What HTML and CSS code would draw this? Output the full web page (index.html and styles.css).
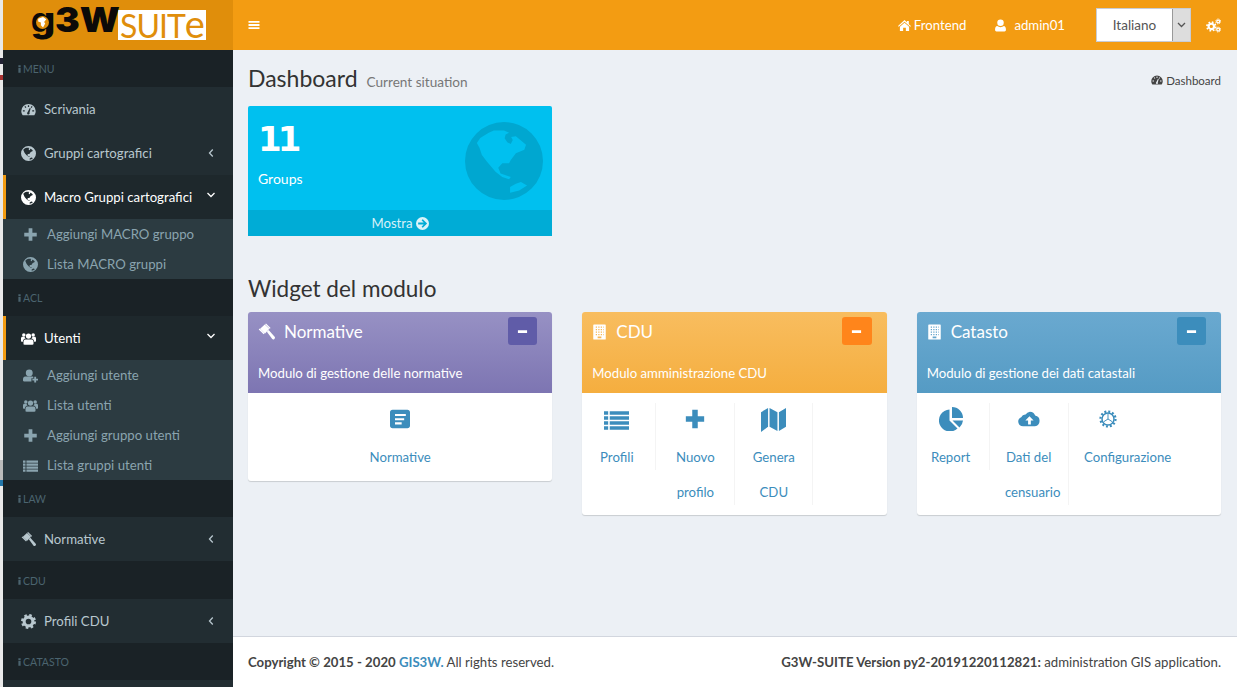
FILE: index.html
```html
<!DOCTYPE html>
<html lang="it">
<head>
  <meta charset="UTF-8">
  <meta name="viewport" content="width=device-width, initial-scale=1.0">
  <title>G3W-SUITE</title>
  <link rel="stylesheet" href="styles.css">
</head>
<body>
  <svg class="sprite" xmlns="http://www.w3.org/2000/svg">
    <symbol id="i-globe" viewBox="0 0 24 24"><path fill="currentColor" fill-rule="evenodd" d="M12 0a12 12 0 1 0 0 24a12 12 0 1 0 0-24zM3.650 6.470L4.690 4.900L7.300 3.340L8.870 2.610L12 2.610L13.560 3.340L12.500 3.860L12.200 5L13 6.200L14.080 6.800L14.700 5.500L14.200 4.600L15.650 4.380L18.770 6.990L18.250 8.550L15.650 9.600L14.080 11.680L13.560 12.720L11.470 12.720L10.220 14.080L10.950 15.850L14.080 16.900L13.560 17.630L11.470 16.900L9.390 15.330L6.780 12.200L5.200 10.120L4.480 8.030zM13.870 20.030L15.650 18.980L17.210 18.460L19.080 19.500L16.680 21.070L13.870 21.800z"/></symbol>
    <symbol id="i-dash" viewBox="0 0 24 24"><path fill="currentColor" fill-rule="evenodd" d="M12 3A11.500 11.500 0 0 0 .5 14.500C.5 17 1.300 19.300 2.700 21H21.300C22.700 19.300 23.500 17 23.500 14.500A11.500 11.500 0 0 0 12 3zM11 5h2v3h-2zM5.500 7.500l1.500-1.200 1.600 2.200-1.500 1.200zM18.500 7.500l-1.500-1.200-1.600 2.200 1.500 1.200zM3 13h3v2H3zM18 13h3v2h-3zM10.500 16.500L14 9.500l1.500.6-2 7a2 2 0 1 1-3-.6z"/></symbol>
    <symbol id="i-plus" viewBox="0 0 24 24"><path fill="currentColor" d="M9 2h6v7h7v6h-7v7H9v-7H2V9h7z"/></symbol>
    <symbol id="i-minus" viewBox="0 0 24 24"><path fill="currentColor" d="M2 9h20v6H2z"/></symbol>
    <symbol id="i-users" viewBox="0 0 24 24"><circle fill="currentColor" cx="12" cy="8" r="4.200"/><circle fill="currentColor" cx="4.500" cy="6.500" r="2.800"/><circle fill="currentColor" cx="19.500" cy="6.500" r="2.800"/><path fill="currentColor" d="M6.500 13.500h11c1.500 0 2.500 1.500 2.500 4v3c0 .8-.7 1.500-1.500 1.500h-13c-.8 0-1.500-.7-1.500-1.500v-3c0-2.500 1-4 2.500-4zM0 11.500c0-1.500 1-2.500 2-2.500h3.500c.5 1 1 2 2 3-2.500.3-4.500 2-4.500 5H1c-.6 0-1-.4-1-1zM24 11.500c0-1.500-1-2.500-2-2.500h-3.500c-.5 1-1 2-2 3 2.500.3 4.500 2 4.500 5h2c.6 0 1-.4 1-1z"/></symbol>
    <symbol id="i-useradd" viewBox="0 0 24 24"><circle fill="currentColor" cx="10" cy="8" r="5.500"/><path fill="currentColor" d="M3.500 13.500h11c.8 0 1.500.2 2 .5v2.500h-3v5H1.500c-.8 0-1.500-.7-1.500-1.500v-2c0-2.500 1.500-4.500 3.500-4.500zM18 14h3v3h3v3h-3v3h-3v-3h-3v-3h3z"/></symbol>
    <symbol id="i-user" viewBox="0 0 24 24"><circle fill="currentColor" cx="12" cy="7" r="6"/><path fill="currentColor" d="M6 13c1.500 1.300 3.700 2 6 2s4.500-.7 6-2c2.500.3 4 2.800 4 6v1.500c0 1.500-1 2.500-2.500 2.500h-15C3 23 2 22 2 20.500V19c0-3.200 1.500-5.700 4-6z"/></symbol>
    <symbol id="i-list" viewBox="0 0 24 24"><path fill="currentColor" d="M0 4h4v3.500H0zM5.500 4H24v3.500H5.500zM0 8.800h4v3.500H0zM5.500 8.800H24v3.500H5.500zM0 13.600h4v3.500H0zM5.500 13.600H24v3.500H5.500zM0 18.400h4v3.500H0zM5.500 18.400H24v3.500H5.500z"/></symbol>
    <symbol id="i-gavel" viewBox="0 0 24 24"><path fill="currentColor" d="M9.500 1.500L16 7.500 10 14 3 7.500zM1 8.500l1.300-1.300 7 6.500L8 15zM10 1l1.300-1 6.500 6.300L16.500 7.500zM12.500 11.500l2.500-2.500 8.500 9.800c.7.800.7 2-.2 2.800l-.5.500c-.8.700-2 .6-2.700-.2z"/></symbol>
    <symbol id="i-cog" viewBox="0 0 24 24"><circle cx="12" cy="12" r="7" fill="none" stroke="currentColor" stroke-width="5"/><circle cx="12" cy="12" r="10" fill="none" stroke="currentColor" stroke-width="4" stroke-dasharray="4 3.850"/></symbol>
    <symbol id="i-cogs" viewBox="0 0 24 24"><circle cx="8.500" cy="13.500" r="4.300" fill="none" stroke="currentColor" stroke-width="3.400"/><circle cx="8.500" cy="13.500" r="7" fill="none" stroke="currentColor" stroke-width="2.600" stroke-dasharray="2.800 2.700"/><circle cx="19.500" cy="5.500" r="2.300" fill="none" stroke="currentColor" stroke-width="2"/><circle cx="19.500" cy="5.500" r="3.900" fill="none" stroke="currentColor" stroke-width="1.600" stroke-dasharray="1.800 1.260"/><circle cx="19.500" cy="18.500" r="2.300" fill="none" stroke="currentColor" stroke-width="2"/><circle cx="19.500" cy="18.500" r="3.900" fill="none" stroke="currentColor" stroke-width="1.600" stroke-dasharray="1.800 1.260"/></symbol>
    <symbol id="i-info" viewBox="0 0 8 24"><path fill="currentColor" d="M1 2h6v5H1zM1 9h6v13H1z"/></symbol>
    <symbol id="i-bars" viewBox="0 0 24 24"><path fill="currentColor" d="M1 4h22v3.600H1zM1 10.200h22v3.600H1zM1 16.400h22V20H1z"/></symbol>
    <symbol id="i-home" viewBox="0 0 24 24"><path fill="currentColor" d="M12 2l4.500 4V3.500h3.500v6l4 3.500-1.300 1.500L12 5 1.300 14.500 0 13zM12 7l8.500 7.500V22h-6v-6h-5v6h-6v-7.500z"/></symbol>
    <symbol id="i-arrow" viewBox="0 0 24 24"><path fill="currentColor" fill-rule="evenodd" d="M12 0a12 12 0 1 0 0 24a12 12 0 1 0 0-24zM12.500 4L20.500 12L12.500 20L10.300 17.800L14.200 13.700H4V10.300H14.200L10.300 6.200z"/></symbol>
    <symbol id="i-building" viewBox="0 0 24 24"><path fill="currentColor" fill-rule="evenodd" d="M3 0h18c.6 0 1 .4 1 1v22c0 .6-.4 1-1 1H3c-.6 0-1-.4-1-1V1c0-.6.4-1 1-1zM6 3v2h2V3zM10 3v2h2V3zM14 3v2h2V3zM18 3v2h1V3zM6 7v2h2V7zM10 7v2h2V7zM14 7v2h2V7zM18 7v2h1V7zM6 11v2h2v-2zM10 11v2h2v-2zM14 11v2h2v-2zM18 11v2h1v-2zM6 15v2h2v-2zM10 15v2h2v-2zM14 15v2h2v-2zM18 15v2h1v-2zM9 19v3h6v-3z"/></symbol>
    <symbol id="i-listalt" viewBox="0 0 24 24"><path fill="currentColor" fill-rule="evenodd" d="M3 1h18c1.700 0 3 1.300 3 3v16c0 1.700-1.300 3-3 3H3c-1.700 0-3-1.300-3-3V4c0-1.700 1.300-3 3-3zM6 6v2.500h13V6zM6 11v2.500h11V11zM6 16v2.500h8V16z"/></symbol>
    <symbol id="i-map" viewBox="0 0 24 24"><path fill="currentColor" d="M0 5l6.800-4v18L0 24zM8.200 1l7.600 4v18l-7.600-4zM17.200 5L24 1v18l-6.800 4z"/></symbol>
    <symbol id="i-pie" viewBox="0 0 24 24"><path fill="currentColor" d="M10.500 2.500V13.500L18.500 21.500A11 11 0 1 1 10.500 2.500zM13 0A11 11 0 0 1 24 11H13zM13.500 13.500H24A11 11 0 0 1 20.500 20.500z"/></symbol>
    <symbol id="i-cloud" viewBox="0 0 24 24"><path fill="currentColor" fill-rule="evenodd" d="M13 4a6 6 0 0 1 5.700 4.200A6 6 0 0 1 18.500 20H5.500A5.200 5.200 0 0 1 3.500 10 5 5 0 0 1 8.300 7.200 6 6 0 0 1 13 4zM12.500 9L8 13.500h3V18h3v-4.500h3z"/></symbol>
    <symbol id="i-gear" viewBox="0 0 24 24"><circle cx="12" cy="12" r="8" fill="none" stroke="currentColor" stroke-width="2"/><circle cx="12" cy="12" r="10" fill="none" stroke="currentColor" stroke-width="3" stroke-dasharray="2.600 2.640"/><path fill="none" stroke="currentColor" stroke-width="1.300" d="M12 5v7l5.500 3.500M12 12l-5.500 3.500"/></symbol>
    <symbol id="i-left" viewBox="0 0 12 24"><path fill="none" stroke="currentColor" stroke-width="2.600" d="M9.500 5L3 12l6.500 7"/></symbol>
    <symbol id="i-down" viewBox="0 0 24 12"><path fill="none" stroke="currentColor" stroke-width="2.600" d="M5 2l7 7 7-7"/></symbol>
  </svg>

  <div class="layout">
    <div class="edge"></div>

    <aside class="sidebar">
      <div class="logo">
        <span class="logo-g3w">g3W</span><span class="logo-box"><span class="logo-suite">SUIT<span class="logo-e">e</span></span></span>
        <svg class="logo-globe" viewBox="0 0 24 24"><circle cx="12" cy="12" r="12" fill="#e08e0b"/><path fill="#fff" d="M4 5L13 2L19 6L15 11L17 14L13 21L9 17L9 12L4 10z"/></svg>
      </div>
      <ul class="menu">
        <li class="menu-head h37"><svg class="i-dot"><use href="#i-info"/></svg>MENU</li>
        <li class="menu-item"><svg class="ico"><use href="#i-dash"/></svg>Scrivania</li>
        <li class="menu-item"><svg class="ico"><use href="#i-globe"/></svg>Gruppi cartografici<svg class="chev-l"><use href="#i-left"/></svg></li>
        <li class="menu-item active"><svg class="ico"><use href="#i-globe"/></svg>Macro Gruppi cartografici<svg class="chev-d"><use href="#i-down"/></svg></li>
        <li>
          <ul class="submenu">
            <li><svg class="ico"><use href="#i-plus"/></svg>Aggiungi MACRO gruppo</li>
            <li><svg class="ico"><use href="#i-globe"/></svg>Lista MACRO gruppi</li>
          </ul>
        </li>
        <li class="menu-head h37"><svg class="i-dot"><use href="#i-info"/></svg>ACL</li>
        <li class="menu-item active"><svg class="ico"><use href="#i-users"/></svg>Utenti<svg class="chev-d"><use href="#i-down"/></svg></li>
        <li>
          <ul class="submenu">
            <li><svg class="ico"><use href="#i-useradd"/></svg>Aggiungi utente</li>
            <li><svg class="ico"><use href="#i-users"/></svg>Lista utenti</li>
            <li><svg class="ico"><use href="#i-plus"/></svg>Aggiungi gruppo utenti</li>
            <li><svg class="ico"><use href="#i-list"/></svg>Lista gruppi utenti</li>
          </ul>
        </li>
        <li class="menu-head h37"><svg class="i-dot"><use href="#i-info"/></svg>LAW</li>
        <li class="menu-item"><svg class="ico"><use href="#i-gavel"/></svg>Normative<svg class="chev-l"><use href="#i-left"/></svg></li>
        <li class="menu-head h38"><svg class="i-dot"><use href="#i-info"/></svg>CDU</li>
        <li class="menu-item"><svg class="ico"><use href="#i-cog"/></svg>Profili CDU<svg class="chev-l"><use href="#i-left"/></svg></li>
        <li class="menu-head h37"><svg class="i-dot"><use href="#i-info"/></svg>CATASTO</li>
        <li class="menu-item"></li>
      </ul>
    </aside>

    <div class="main">
      <header class="topbar">
        <svg class="bars"><use href="#i-bars"/></svg>
        <nav class="topnav">
          <a class="top-link home"><svg class="ico-13"><use href="#i-home"/></svg>Frontend</a>
          <a class="top-link admin"><svg class="ico-user"><use href="#i-user"/></svg>admin01</a>
          <div class="lang">
            <span class="lang-value">Italiano</span>
            <span class="lang-arrow"><svg><use href="#i-down"/></svg></span>
          </div>
          <svg class="cogs"><use href="#i-cogs"/></svg>
        </nav>
      </header>

      <main class="content">
        <div class="page-head">
          <h1>Dashboard <small>Current situation</small></h1>
          <div class="crumb"><svg><use href="#i-dash"/></svg>Dashboard</div>
        </div>

        <div class="stat">
          <div class="stat-inner">
            <h3>11</h3>
            <p>Groups</p>
            <svg class="stat-globe"><use href="#i-globe"/></svg>
          </div>
          <a class="stat-foot">Mostra <svg><use href="#i-arrow"/></svg></a>
        </div>

        <h2 class="section">Widget del modulo</h2>

        <div class="widgets">
          <section class="card purple">
            <div class="card-head">
              <div class="card-title"><svg class="card-ico"><use href="#i-gavel"/></svg>Normative<button class="btn-min"><svg><use href="#i-minus"/></svg></button></div>
              <p>Modulo di gestione delle normative</p>
            </div>
            <div class="card-body">
              <a class="cell wide"><span class="cell-ico"><svg class="s20"><use href="#i-listalt"/></svg></span><span class="cell-text">Normative</span></a>
            </div>
          </section>

          <section class="card orange">
            <div class="card-head">
              <div class="card-title narrow"><svg class="card-ico"><use href="#i-building"/></svg>CDU<button class="btn-min"><svg><use href="#i-minus"/></svg></button></div>
              <p>Modulo amministrazione CDU</p>
            </div>
            <div class="card-body">
              <a class="cell w74 tight"><span class="cell-ico"><svg class="s25"><use href="#i-list"/></svg></span><span class="cell-text">Profili</span></a>
              <a class="cell w79"><span class="cell-ico"><svg class="s22"><use href="#i-plus"/></svg></span><span class="cell-text">Nuovo<br>profilo</span></a>
              <a class="cell w78"><span class="cell-ico"><svg class="s25"><use href="#i-map"/></svg></span><span class="cell-text">Genera<br>CDU</span></a>
            </div>
          </section>

          <section class="card blue">
            <div class="card-head">
              <div class="card-title narrow"><svg class="card-ico"><use href="#i-building"/></svg>Catasto<button class="btn-min"><svg><use href="#i-minus"/></svg></button></div>
              <p>Modulo di gestione dei dati catastali</p>
            </div>
            <div class="card-body">
              <a class="cell w73 tight"><span class="cell-ico"><svg class="s24"><use href="#i-pie"/></svg></span><span class="cell-text">Report</span></a>
              <a class="cell w79"><span class="cell-ico"><svg class="s22"><use href="#i-cloud"/></svg></span><span class="cell-text">Dati del<br><span class="nudge">censuario</span></span></a>
              <a class="cell w118"><span class="cell-ico off"><svg class="s18"><use href="#i-gear"/></svg></span><span class="cell-text">Configurazione</span></a>
            </div>
          </section>
        </div>
      </main>

      <footer class="footer">
        <div><b>Copyright © 2015 - 2020 <a>GIS3W.</a></b> All rights reserved.</div>
        <div><b>G3W-SUITE Version py2-20191220112821:</b> administration GIS application.</div>
      </footer>
    </div>
  </div>
</body>
</html>
```

FILE: styles.css
```css
* {
  box-sizing: border-box;
}
html, body {
  margin: 0;
  padding: 0;
  height: 100%;
  overflow: hidden;
}
body {
  font-family: Lato, "Noto Sans", Arial, sans-serif;
  font-size: 13.2px;
  color: #333;
  background-color: #ecf0f5;
}
ul {
  list-style: none;
  margin: 0;
  padding: 0;
}
a {
  color: #3c8dbc;
}
.sprite {
  display: none;
}
.layout {
  display: flex;
  height: 687px;
}

/* resto della finestra dietro */
.edge {
  width: 3px;
  flex: none;
  background: linear-gradient(#e9e9e9 0, #e9e9e9 58px, #223 58px, #223 64px, #e9e9e9 64px, #e9e9e9 75px, #a33 75px, #a33 80px, #e9e9e9 80px, #e9e9e9 460px, #bbb 460px, #bbb 480px, #27a 480px, #27a 486px, #e9e9e9 486px);
}

/* sidebar */
.sidebar {
  width: 230px;
  flex: none;
  background-color: #1a2226;
  overflow: hidden;
}
.logo {
  height: 50px;
  background-color: #e08e0b;
  display: flex;
  align-items: center;
  padding-left: 28px;
  position: relative;
}
.logo-g3w {
  font-family: Inter, sans-serif;
  font-weight: 900;
  font-size: 34px;
  line-height: 34px;
  color: #0c0a08;
  width: 87px;
  flex: none;
  align-self: flex-start;
  margin-top: 3px;
  transform: scaleX(1.09);
  transform-origin: left center;
}
.logo-box {
  background-color: #fff;
  height: 30px;
  width: 88px;
  flex: none;
  display: flex;
  align-items: center;
  justify-content: center;
}
.logo-suite {
  display: block;
  color: #e08e0b;
  font-size: 32px;
  letter-spacing: -1px;
  line-height: 30px;
  padding-bottom: 2px;
}
.logo-e {
  font-size: 38px;
}
.logo-globe {
  position: absolute;
  left: 33px;
  top: 16px;
  width: 13px;
  height: 13px;
}
.menu-head {
  display: flex;
  align-items: center;
  font-size: 10.5px;
  color: #4b646f;
  padding-left: 15px;
}
.h37 {
  height: 37px;
}
.h38 {
  height: 38px;
  padding-top: 1px;
}
.i-dot {
  width: 3px;
  height: 10px;
  margin-right: 2px;
}
.menu-item {
  height: 44px;
  display: flex;
  align-items: center;
  position: relative;
  padding-left: 18px;
  background-color: #222d32;
  color: #b8c7ce;
}
.menu-item.active {
  background-color: #1e282c;
  color: #fff;
  border-left: 3px solid #f39c12;
  padding-left: 15px;
}
.ico {
  width: 15px;
  height: 15px;
  margin-right: 8px;
  flex: none;
}
.chev-l {
  position: absolute;
  right: 19px;
  top: 16px;
  width: 6px;
  height: 12px;
}
.chev-d {
  position: absolute;
  right: 16px;
  top: 17px;
  width: 12px;
  height: 6px;
}
.submenu {
  background-color: #2c3b41;
}
.submenu li {
  height: 30px;
  display: flex;
  align-items: center;
  padding-left: 20px;
  color: #8aa4af;
}
.submenu .ico {
  margin-right: 9px;
}

/* area destra */
.main {
  flex: 1;
  min-width: 0;
  display: flex;
  flex-direction: column;
}
.topbar {
  height: 50px;
  flex: none;
  background-color: #f39c12;
  display: flex;
  align-items: center;
  justify-content: space-between;
  padding: 0 16px 0 15px;
  color: #fff;
}
.bars {
  width: 12px;
  height: 12px;
}
.topnav {
  display: flex;
  align-items: center;
}
.top-link {
  display: flex;
  align-items: center;
  color: #fff;
}
.ico-13 {
  width: 13px;
  height: 13px;
  margin-right: 3px;
}
.ico-user {
  width: 13px;
  height: 13px;
  margin-right: 7px;
}
.home {
  margin-right: 28px;
}
.admin {
  margin-right: 31px;
}
.lang {
  width: 95px;
  height: 34px;
  display: flex;
  background-color: #fff;
  border: 1px solid #c8ccd4;
  color: #555;
}
.lang-value {
  flex: 1;
  text-align: center;
  line-height: 32px;
  font-size: 13.5px;
}
.lang-arrow {
  width: 18px;
  background-color: #ddd;
  border-left: 1px solid #999;
  display: flex;
  align-items: center;
  justify-content: center;
}
.lang-arrow svg {
  width: 13px;
  height: 6px;
}
.cogs {
  width: 15px;
  height: 15px;
  margin-left: 15px;
}
.content {
  flex: 1;
  padding: 16px 16px 0 15px;
}
.page-head {
  display: flex;
  justify-content: space-between;
  align-items: center;
  height: 28px;
  margin-bottom: 12px;
}
h1 {
  margin: 0;
  font-size: 23px;
  font-weight: 400;
  line-height: 28px;
}
h1 small {
  font-size: 13.6px;
  color: #777;
  margin-left: 3px;
}
.crumb {
  display: flex;
  align-items: center;
  font-size: 11.5px;
  color: #444;
}
.crumb svg {
  width: 12px;
  height: 12px;
  margin-right: 3px;
}

/* box statistica */
.stat {
  width: 304px;
  height: 130px;
  background-color: #00c0ef;
  border-radius: 2px;
  color: #fff;
  display: flex;
  flex-direction: column;
}
.stat-inner {
  position: relative;
  height: 104px;
  padding: 10px;
}
.stat-inner h3 {
  margin: 0;
  font-family: "DejaVu Sans", sans-serif;
  font-size: 34px;
  font-weight: 700;
  letter-spacing: -4px;
  line-height: 46px;
}
.stat-inner p {
  margin: 7px 0 0;
  font-size: 14px;
  line-height: 20px;
}
.stat-globe {
  position: absolute;
  right: 9px;
  top: 16px;
  width: 78px;
  height: 78px;
  color: #00a7d0;
}
.stat-foot {
  height: 26px;
  background-color: #00acd6;
  color: rgba(255, 255, 255, 0.85);
  display: flex;
  align-items: center;
  justify-content: center;
  gap: 3px;
}
.stat-foot svg {
  width: 13px;
  height: 13px;
}
.section {
  margin: 39px 0 9px;
  font-size: 22.5px;
  font-weight: 400;
  line-height: 28px;
}

/* widget */
.widgets {
  display: grid;
  grid-template-columns: repeat(3, 1fr);
  gap: 30px;
  align-items: start;
}
.card {
  background-color: #fff;
  border-radius: 3px;
  box-shadow: 0 1px 1px rgba(0, 0, 0, 0.15);
  overflow: hidden;
}
.card-head {
  height: 81px;
  padding: 5px 15px 0 10px;
  color: #fff;
}
.card-head p {
  margin: 18px 0 0;
  line-height: 20px;
}
.purple .card-head {
  background: linear-gradient(#9791c4, #7d75b2);
}
.orange .card-head {
  background: linear-gradient(#f8bd5f, #f5ae3f);
}
.blue .card-head {
  background: linear-gradient(#6aa9d0, #559bc4);
}
.card-title {
  display: flex;
  align-items: center;
  height: 28px;
  font-size: 17px;
  padding-top: 1px;
}
.card-ico {
  width: 17px;
  height: 18px;
  margin-right: 9px;
}
.narrow .card-ico {
  width: 15px;
  margin-right: 9px;
}
.btn-min {
  margin-left: auto;
  width: 29px;
  height: 28px;
  margin-top: -1px;
  border: 0;
  border-radius: 3px;
  padding: 0;
  color: #fff;
  display: flex;
  align-items: center;
  justify-content: center;
}
.btn-min svg {
  width: 11px;
  height: 11px;
}
.purple .btn-min {
  background-color: #605ca8;
}
.orange .btn-min {
  background-color: #ff851b;
  width: 30px;
}
.blue .btn-min {
  background-color: #3c8dbc;
}
.card-body {
  display: flex;
  align-items: flex-start;
  padding: 10px 0;
}
.cell {
  display: block;
  text-align: center;
  border-right: 1px solid #f4f4f4;
  flex: none;
}
.cell.wide {
  border-right: 0;
  flex: 1;
  min-height: 68px;
}
.tight {
  padding-right: 4px;
}
.w73 {
  width: 73px;
}
.w74 {
  width: 74px;
}
.w78 {
  width: 78px;
}
.w79 {
  width: 79px;
}
.w118 {
  width: 118px;
  border-right: 0;
}
.cell-ico {
  display: flex;
  height: 32px;
  align-items: center;
  justify-content: center;
  margin-bottom: 5px;
}
.cell-ico.off {
  justify-content: flex-start;
  padding-left: 30px;
}
.cell-text {
  display: block;
  line-height: 35px;
  margin-bottom: -5px;
}
.nudge {
  padding-left: 8px;
}
.s18 {
  width: 18px;
  height: 18px;
}
.s20 {
  width: 20px;
  height: 20px;
}
.s22 {
  width: 22px;
  height: 22px;
}
.s24 {
  width: 24px;
  height: 24px;
}
.s25 {
  width: 25px;
  height: 25px;
}

/* footer */
.footer {
  height: 51px;
  flex: none;
  background-color: #fff;
  border-top: 1px solid #d2d6de;
  display: flex;
  align-items: center;
  justify-content: space-between;
  padding: 0 16px 0 15px;
  color: #444;
}
```
